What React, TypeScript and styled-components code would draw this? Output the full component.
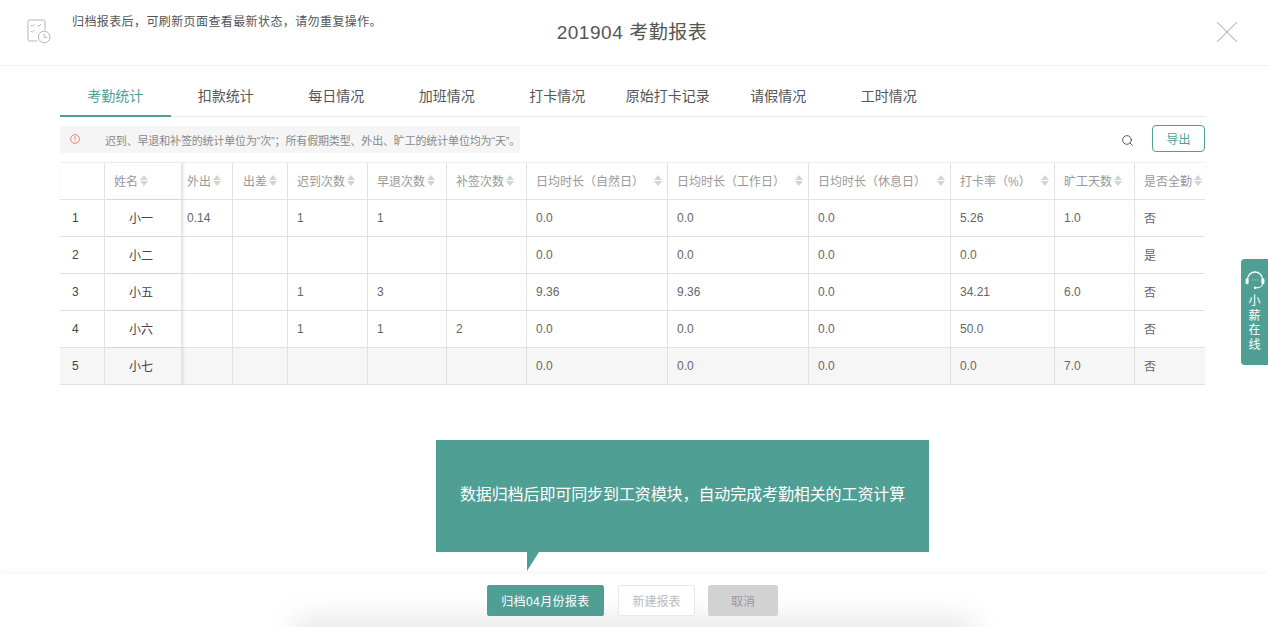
import { createGlobalStyle, default as styled } from 'styled-components';
import { Search } from 'lucide-react';

const GREEN = '#4f9f95';

const GlobalStyle = createGlobalStyle`
	html, body {
		margin: 0;
		padding: 0;
		background: #fff;
		font-family: "Liberation Sans", "Noto Sans CJK SC", sans-serif;
	}
	* { box-sizing: border-box; }
`;

const Page = styled.div`
	position: relative;
	width: 1268px;
	height: 627px;
	overflow: hidden;
	display: flex;
	flex-direction: column;
`;

const Header = styled.header`
	height: 66px;
	flex: none;
	display: grid;
	grid-template-columns: 1fr auto 1fr;
	border-bottom: 1px solid #f0f0f0;
	padding: 0 31px 0 27px;
`;

const Notice = styled.div`
	display: flex;
	gap: 21px;
	padding-top: 14px;
	font-size: 12px;
	line-height: 17px;
	letter-spacing: 0.4px;
	color: #555;
	white-space: nowrap;
	svg { margin-top: 5px; flex: none; }
`;

const Title = styled.h1`
	margin: 0;
	padding-top: 20px;
	font-size: 19px;
	line-height: 25px;
	letter-spacing: 0.55px;
	font-weight: 400;
	color: #555;
`;

const Close = styled.div`
	justify-self: end;
	padding-top: 22px;
`;

const Main = styled.main`
	padding: 14px 63px 0 60px;
	flex: 1;
	min-height: 0;
`;

const Tabs = styled.nav`
	display: flex;
	height: 37px;
	border-bottom: 1px solid #e8e8e8;
`;

const Tab = styled.div<{ $active?: boolean }>`
	width: 110.5px;
	height: 37px;
	padding-top: 6px;
	text-align: center;
	font-size: 14px;
	line-height: 20px;
	color: ${p => (p.$active ? GREEN : '#555')};
	border-bottom: 2px solid ${p => (p.$active ? GREEN : 'transparent')};
`;

const Toolbar = styled.div`
	display: flex;
	align-items: center;
	height: 27px;
	margin-top: 9px;
`;

const Hint = styled.div`
	width: 460px;
	height: 27px;
	display: flex;
	align-items: center;
	padding-left: 10px;
	gap: 25px;
	background: #f5f5f5;
	font-size: 11px;
	letter-spacing: -0.16px;
	color: #888;
	white-space: nowrap;
	svg { flex: none; margin-top: -2px; }
`;

const Tools = styled.div`
	margin-left: auto;
	margin-top: -2px;
	display: flex;
	align-items: center;
	gap: 18px;
	svg { margin-top: 4px; }
`;

const ExportButton = styled.button`
	width: 53px;
	height: 27px;
	padding: 0;
	border: 1px solid ${GREEN};
	border-radius: 4px;
	background: #fff;
	color: ${GREEN};
	font: inherit;
	font-size: 12px;
`;

const TableWrap = styled.div`
	margin-top: 9px;
	width: 1145px;
`;

const COLUMNS = '45px 77px 51px 55px 80px 79px 80px 141px 141px 142px 104px 80px 70px';

const HeadRow = styled.div`
	display: grid;
	grid-template-columns: ${COLUMNS};
	height: 38px;
	border-top: 1px solid #f0f0f0;
	border-bottom: 1px solid #e4e4e4;
	box-shadow: 0 1px 2px rgba(0, 0, 0, 0.06);
`;

const Row = styled.div<{ $hover?: boolean }>`
	display: grid;
	grid-template-columns: ${COLUMNS};
	height: 37px;
	border-bottom: 1px solid #e2e2e2;
	background: ${p => (p.$hover ? '#f6f6f6' : '#fff')};
`;

const HeadCell = styled.div<{ $frozenEnd?: boolean; $pad: number }>`
	display: flex;
	align-items: center;
	gap: 2px;
	padding: 0 0 2px ${p => p.$pad}px;
	font-size: 12px;
	color: #999;
	white-space: nowrap;
	overflow: hidden;
	border-right: 1px solid #e2e2e2;
	box-shadow: ${p => (p.$frozenEnd ? '2px 0 2px rgba(0, 0, 0, 0.08)' : 'none')};
	&:last-child { border-right: 0; }
`;

const Wide = styled.span`
	flex: 1;
`;

const Cell = styled.div<{ $frozenEnd?: boolean; $center?: boolean; $pad: number; $cjk?: boolean; $dark?: boolean }>`
	display: flex;
	align-items: center;
	justify-content: ${p => (p.$center ? 'center' : 'flex-start')};
	padding: 0 ${p => (p.$center ? 4 : 0)}px ${p => (p.$cjk ? 2 : 0)}px ${p => p.$pad}px;
	font-size: 12px;
	color: ${p => (p.$dark ? '#444' : '#666')};
	border-right: 1px solid #e2e2e2;
	box-shadow: ${p => (p.$frozenEnd ? '2px 0 2px rgba(0, 0, 0, 0.08)' : 'none')};
	&:last-child { border-right: 0; }
`;

const Sort = styled.i`
	flex: none;
	display: inline-flex;
	flex-direction: column;
	gap: 1px;
	margin-right: 5px;
	&::before, &::after {
		content: '';
		width: 0;
		height: 0;
		border-left: 4.5px solid transparent;
		border-right: 4.5px solid transparent;
	}
	&::before { border-bottom: 5px solid #d4d4d4; }
	&::after { border-top: 5px solid #d4d4d4; }
`;

const Tip = styled.div`
	position: absolute;
	left: 436px;
	top: 440px;
	width: 493px;
	height: 112px;
	padding-bottom: 6px;
	display: flex;
	align-items: center;
	justify-content: center;
	background: ${GREEN};
	color: #fff;
	font-size: 16px;
	letter-spacing: -0.1px;
	z-index: 2;
	&::after {
		content: '';
		position: absolute;
		left: 91px;
		top: 100%;
		border-left: 0 solid transparent;
		border-right: 12px solid transparent;
		border-top: 19px solid ${GREEN};
	}
`;

const Footer = styled.footer`
	position: relative;
	height: 53px;
	flex: none;
	display: flex;
	justify-content: center;
	gap: 13px;
	padding: 11px 3px 0 0;
	background: #fff;
	box-shadow: 0 -3px 6px rgba(0, 0, 0, 0.035);
	z-index: 1;
	&::after {
		content: '';
		position: absolute;
		left: 300px;
		right: 300px;
		top: 53px;
		height: 10px;
		box-shadow: 0 0 30px 6px rgba(0, 0, 0, 0.13);
	}
`;

const FooterButton = styled.button<{ $kind: 'primary' | 'ghost' | 'muted' }>`
	position: relative;
	z-index: 1;
	width: ${p => (p.$kind === 'primary' ? 117 : p.$kind === 'ghost' ? 77 : 70)}px;
	height: 31px;
	margin-left: ${p => (p.$kind === 'ghost' ? 1 : 0)}px;
	padding: 0;
	border-radius: 2px;
	font: inherit;
	font-size: 12px;
	letter-spacing: ${p => (p.$kind === 'primary' ? 0.4 : 0)}px;
	border: 1px solid ${p => (p.$kind === 'primary' ? GREEN : p.$kind === 'ghost' ? '#e8e8e8' : '#d2d2d2')};
	background: ${p => (p.$kind === 'primary' ? GREEN : p.$kind === 'ghost' ? '#fff' : '#d2d2d2')};
	color: ${p => (p.$kind === 'primary' ? '#fff' : p.$kind === 'ghost' ? '#bbb' : '#999')};
`;

const Online = styled.aside`
	position: absolute;
	right: 0;
	top: 259px;
	width: 27px;
	height: 106px;
	display: flex;
	flex-direction: column;
	align-items: center;
	padding-top: 12px;
	background: ${GREEN};
	border-radius: 4px 0 0 4px;
	color: #fff;
	font-size: 12px;
	line-height: 14.5px;
	text-align: center;
	z-index: 3;
	span { display: block; width: 12px; margin-top: 3px; }
`;

const tabs = ['考勤统计', '扣款统计', '每日情况', '加班情况', '打卡情况', '原始打卡记录', '请假情况', '工时情况'];

const heads = ['', '姓名', '外出', '出差', '迟到次数', '早退次数', '补签次数', '日均时长（自然日）', '日均时长（工作日）', '日均时长（休息日）', '打卡率（%）', '旷工天数', '是否全勤'];

const headPad = (i: number) => (i === 0 ? 0 : i === 2 ? 5 : i === 3 ? 10 : 9);

const rows: string[][] = [
	['1', '小一', '0.14', '', '1', '1', '', '0.0', '0.0', '0.0', '5.26', '1.0', '否'],
	['2', '小二', '', '', '', '', '', '0.0', '0.0', '0.0', '0.0', '', '是'],
	['3', '小五', '', '', '1', '3', '', '9.36', '9.36', '0.0', '34.21', '6.0', '否'],
	['4', '小六', '', '', '1', '1', '2', '0.0', '0.0', '0.0', '50.0', '', '否'],
	['5', '小七', '', '', '', '', '', '0.0', '0.0', '0.0', '0.0', '7.0', '否'],
];

const cellPad = (i: number) => (i === 0 ? 12 : i === 1 ? 0 : i === 2 ? 5 : 9);

const ReportIcon = () => (
	<svg width="24" height="25" viewBox="0 0 24 25" fill="none" stroke="#b5b5b5" strokeWidth="1">
		<path d="M10.5 22H2.5A1.5 1.5 0 0 1 1 20.5V2.5A1.5 1.5 0 0 1 2.5 1h14A1.5 1.5 0 0 1 18 2.5V11" />
		<path d="M4 6l1.3 1.3L7.3 5.2M10.5 6l1.3 1.3 2-2.1M4 12l1.3 1.3 2-2.1" />
		<circle cx="17.2" cy="18" r="5.8" />
		<path d="M17.2 14.5V18.3h3" />
	</svg>
);

const CloseIcon = () => (
	<svg width="20" height="20" viewBox="0 0 20 20" stroke="#bdbdbd" strokeWidth="1.2">
		<path d="M0 0l20 20M20 0L0 20" />
	</svg>
);

const AlertIcon = () => (
	<svg width="10" height="10" viewBox="0 0 10 10" fill="none" stroke="#ef7a5c" strokeWidth="0.9">
		<circle cx="5" cy="5" r="4.4" />
		<path d="M5 2.2v3.4M5 6.6v1" />
	</svg>
);

const HeadsetIcon = () => (
	<svg width="20" height="20" viewBox="0 0 20 20" fill="none" stroke="#fff">
		<path d="M2.5 10V8.5a7.5 7.5 0 0 1 15 0V10" strokeWidth="1.3" />
		<rect x="0.8" y="7.5" width="2.6" height="5.6" rx="1.3" fill="#fff" strokeWidth="0.4" />
		<rect x="16.6" y="7.5" width="2.6" height="5.6" rx="1.3" fill="#fff" strokeWidth="0.4" />
		<path d="M17.5 13c0 2.5-2.5 3.8-6 3.8" strokeWidth="1" />
		<circle cx="10.3" cy="16.8" r="1.4" fill="#fff" stroke="none" />
		<path d="M7 9h.8M9.6 9h.8M12.2 9h.8" strokeWidth="0.8" />
	</svg>
);

const App = () => {
	return <Page>
		<GlobalStyle />
		<Header>
			<Notice>
				<ReportIcon />
				归档报表后，可刷新页面查看最新状态，请勿重复操作。
			</Notice>
			<Title>201904 考勤报表</Title>
			<Close><CloseIcon /></Close>
		</Header>
		<Main>
			<Tabs>
				{ tabs.map((t, i) => <Tab key={t} $active={i === 0}>{ t }</Tab>) }
			</Tabs>
			<Toolbar>
				<Hint>
					<AlertIcon />
					迟到、早退和补签的统计单位为“次”；所有假期类型、外出、旷工的统计单位均为“天”。
				</Hint>
				<Tools>
					<Search size={13} color="#444" strokeWidth={1.6} />
					<ExportButton>导出</ExportButton>
				</Tools>
			</Toolbar>
			<TableWrap>
				<HeadRow>
					{ heads.map((h, i) => <HeadCell key={i} $pad={headPad(i)} $frozenEnd={i === 1}>
						{ h }
						{ i >= 7 && i <= 10 && <Wide /> }
						{ i > 0 && <Sort /> }
					</HeadCell>) }
				</HeadRow>
				{ rows.map((r, ri) => <Row key={ri} $hover={ri === 4}>
					{ r.map((c, i) => <Cell
						key={i}
						$pad={cellPad(i)}
						$dark={i < 2}
						$center={i === 1}
						$cjk={i === 1 || i === 12}
						$frozenEnd={i === 1}
					>{ c }</Cell>) }
				</Row>) }
			</TableWrap>
		</Main>
		<Tip>数据归档后即可同步到工资模块，自动完成考勤相关的工资计算</Tip>
		<Footer>
			<FooterButton $kind="primary">归档04月份报表</FooterButton>
			<FooterButton $kind="ghost">新建报表</FooterButton>
			<FooterButton $kind="muted">取消</FooterButton>
		</Footer>
		<Online>
			<HeadsetIcon />
			<span>小薪在线</span>
		</Online>
	</Page>;
};

export default App;
